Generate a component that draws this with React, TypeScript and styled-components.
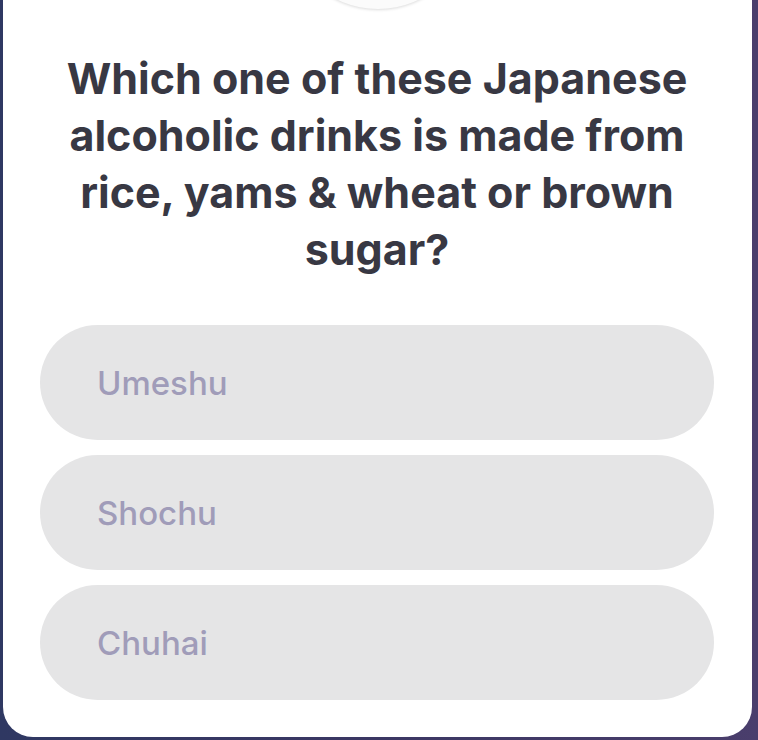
import React from "react";
import styled, { createGlobalStyle } from "styled-components";

const GlobalStyle = createGlobalStyle`
  html, body { margin: 0; padding: 0; }
  body {
    background: linear-gradient(90deg, #2f3862 0%, #3b3763 50%, #4a3e6c 100%);
    font-family: "Inter", "Liberation Sans", sans-serif;
  }
`;

const Page = styled.div`
  width: 758px;
  height: 740px;
  box-sizing: border-box;
  padding: 0 6px 3px 3px;
  overflow: hidden;
`;

const Card = styled.div`
  position: relative;
  height: 100%;
  background: #ffffff;
  border-radius: 0 0 30px 30px;
  overflow: hidden;
  box-sizing: border-box;
  padding: 50px 38px 0 37px;
  display: flex;
  flex-direction: column;
`;

const Badge = styled.div`
  position: absolute;
  left: 50%;
  top: -177px;
  width: 186px;
  height: 186px;
  margin-left: -93px;
  border-radius: 50%;
  background: #fbfbfb;
  box-shadow: 0 1px 3px rgba(0, 0, 0, 0.14);
`;

const Question = styled.h1`
  margin: 0 0 47px;
  padding: 0;
  text-align: center;
  font-family: "Inter", sans-serif;
  font-weight: 700;
  font-size: 43px;
  line-height: 57px;
  color: #383843;
  letter-spacing: 0;
`;

const Options = styled.div`
  display: flex;
  flex-direction: column;
  gap: 15px;
`;

const Option = styled.button`
  display: flex;
  align-items: center;
  height: 115px;
  padding: 0 0 0 57px;
  border: none;
  border-radius: 58px;
  background: #e5e5e6;
  font-family: "Inter", sans-serif;
  font-weight: 500;
  font-size: 33px;
  color: #a09cb9;
  text-align: left;
  cursor: pointer;
`;

const answers = ["Umeshu", "Shochu", "Chuhai"];

export default function App() {
  return (
    <>
      <GlobalStyle />
      <Page>
        <Card>
          <Badge />
          <Question>
            Which one of these Japanese alcoholic drinks is made from rice, yams &amp; wheat or brown sugar?
          </Question>
          <Options>
            {answers.map((a) => (
              <Option key={a}>{a}</Option>
            ))}
          </Options>
        </Card>
      </Page>
    </>
  );
}
